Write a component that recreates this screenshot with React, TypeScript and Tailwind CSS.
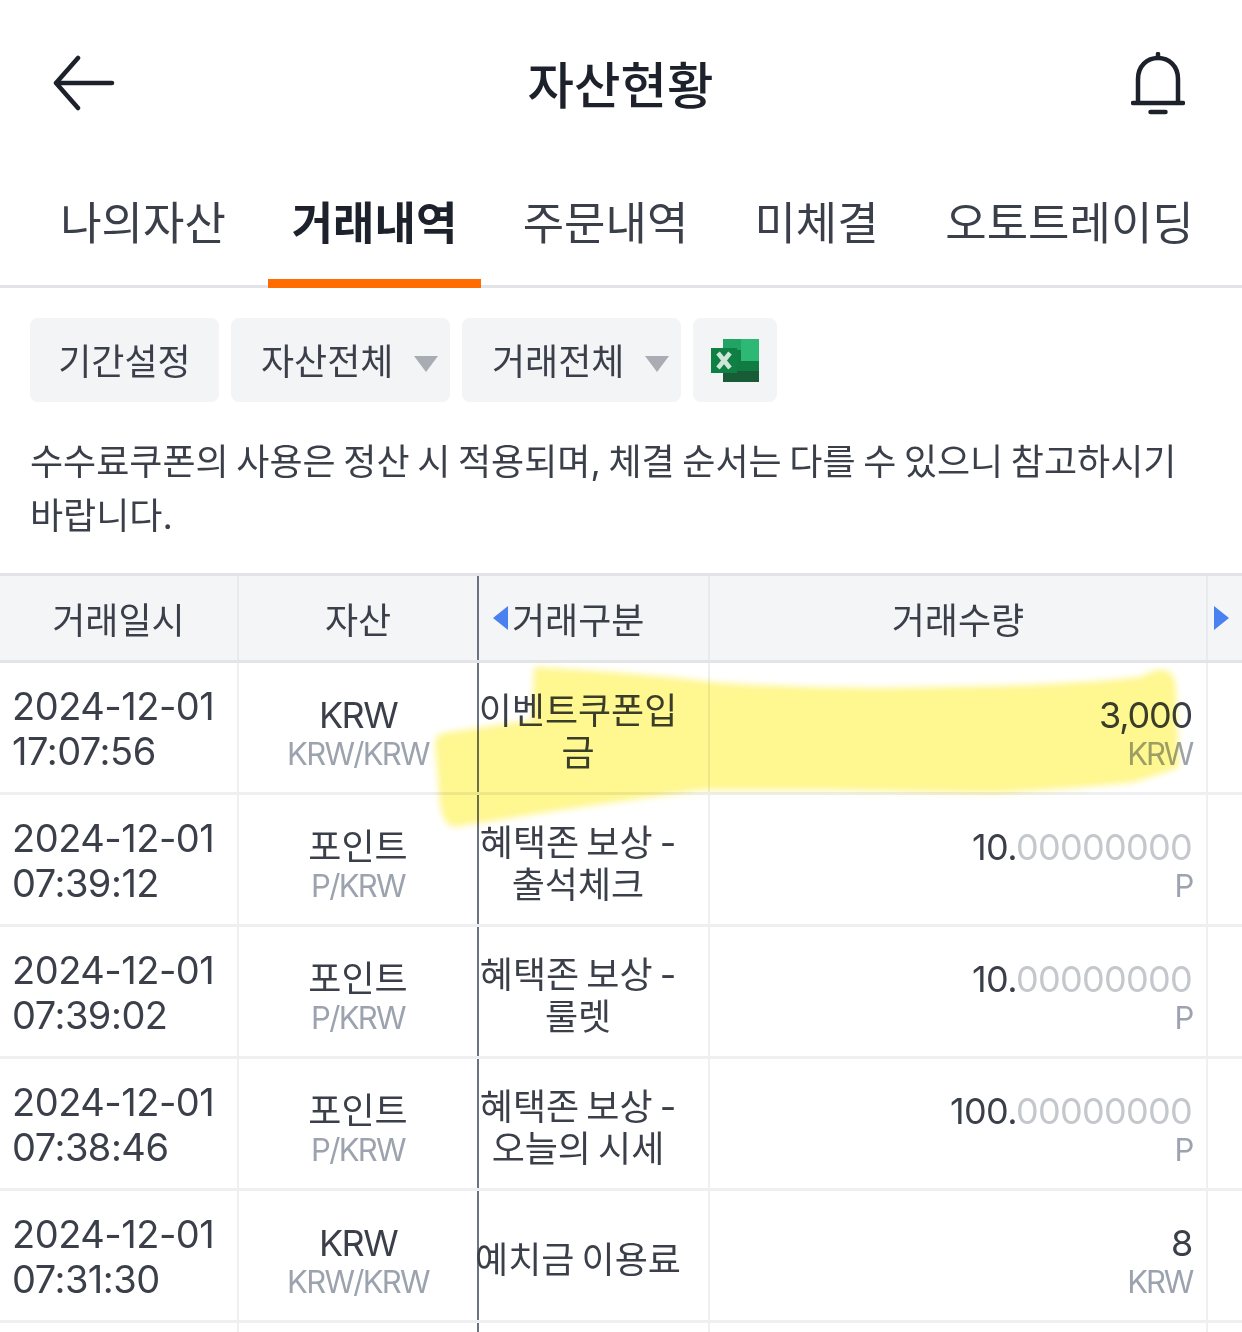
const font = "font-['Inter','Noto_Sans_CJK_KR',sans-serif]";

const rows = [
  { date: "2024-12-01", time: "17:07:56", asset: "KRW", pair: "KRW/KRW", kind: ["이벤트쿠폰입", "금"], whole: "3,000", frac: "", unit: "KRW" },
  { date: "2024-12-01", time: "07:39:12", asset: "포인트", pair: "P/KRW", kind: ["혜택존 보상 -", "출석체크"], whole: "10.", frac: "00000000", unit: "P" },
  { date: "2024-12-01", time: "07:39:02", asset: "포인트", pair: "P/KRW", kind: ["혜택존 보상 -", "룰렛"], whole: "10.", frac: "00000000", unit: "P" },
  { date: "2024-12-01", time: "07:38:46", asset: "포인트", pair: "P/KRW", kind: ["혜택존 보상 -", "오늘의 시세"], whole: "100.", frac: "00000000", unit: "P" },
  { date: "2024-12-01", time: "07:31:30", asset: "KRW", pair: "KRW/KRW", kind: ["예치금 이용료"], whole: "8", frac: "", unit: "KRW" },
];

const tabs = [
  { label: "나의자산", cls: "w-[268px] pl-[18px]" },
  { label: "거래내역", cls: "w-[213px]", active: true },
  { label: "주문내역", cls: "w-[239px] pl-[10px]" },
  { label: "미체결", cls: "w-[191px] pl-[2px]" },
  { label: "오토트레이딩", cls: "flex-1 pr-[14px]" },
];

function Caret() {
  return <span className="ml-[21px] mt-[3px] h-0 w-0 border-x-[12px] border-t-[16px] border-x-transparent border-t-[#a9adb3]" />;
}

function ExcelIcon() {
  return (
    <svg className="blur-[0.7px]" width="48" height="43" viewBox="0 0 48 43">
      <rect x="12" y="0" width="36" height="43" fill="#107c41" />
      <rect x="12" y="0" width="18" height="11" fill="#21a366" />
      <rect x="30" y="0" width="18" height="22" fill="#2eb876" />
      <rect x="12" y="32" width="36" height="11" fill="#185c37" />
      <rect x="0" y="9" width="26" height="25" fill="#0f8044" />
      <path d="M7 14l12 15M19 14L7 29" stroke="#cfe6d8" strokeWidth="4.5" fill="none" />
    </svg>
  );
}

export default function App() {
  return (
    <div className={`relative h-[1332px] w-[1242px] overflow-hidden bg-white text-[#3a3f4a] ${font}`}>
      {/* 상단 헤더 */}
      <header className="flex h-[168px] items-center justify-between pl-[52px] pr-[57px] text-[#1d212b]">
        <svg width="64" height="58" viewBox="0 0 64 58" fill="none" stroke="currentColor" strokeWidth="4.5" strokeLinecap="round" strokeLinejoin="round">
          <path d="M4 28h56M26 3L4 28l22 25" />
        </svg>
        <h1 className="mr-[6px] pt-[4px] text-[50.500px] font-medium leading-none">자산현황</h1>
        <svg width="54" height="64" viewBox="0 0 54 64" fill="none" stroke="currentColor" strokeWidth="4.5" strokeLinecap="round">
          <path d="M2 51h50M7 51V27c0-13 9-21 20-21s20 8 20 21v24M27 2v4M19.500 60h15" />
        </svg>
      </header>

      {/* 탭 */}
      <nav className="flex h-[120px] border-b-[3px] border-[#e2e4e8]">
        {tabs.map((t) => (
          <div
            key={t.label}
            className={`relative flex items-center justify-center pb-[6px] text-[45px] ${t.cls} ${t.active ? "font-bold text-[#1d212b]" : ""}`}
          >
            {t.label}
            {t.active && <span className="absolute inset-x-0 -bottom-[3px] h-[9px] bg-[#ff6c00]" />}
          </div>
        ))}
      </nav>

      {/* 필터 */}
      <div className="flex gap-3 px-[30px] pt-[30px] text-[36px]">
        <div className="flex h-[84px] w-[189px] items-center justify-center rounded-lg bg-[#f3f4f6] pt-[4px]">기간설정</div>
        <div className="flex h-[84px] w-[219px] items-center rounded-lg bg-[#f3f4f6] pl-[30px] pt-[4px]">
          자산전체
          <Caret />
        </div>
        <div className="flex h-[84px] w-[219px] items-center rounded-lg bg-[#f3f4f6] pl-[30px] pt-[4px]">
          거래전체
          <Caret />
        </div>
        <div className="flex h-[84px] w-[84px] items-center justify-center rounded-lg bg-[#f3f4f6]">
          <ExcelIcon />
        </div>
      </div>

      <p className="mt-[33px] h-[138px] px-[30px] text-[36px] leading-[54px] [word-spacing:-2.500px]">
        수수료쿠폰의 사용은 정산 시 적용되며, 체결 순서는 다를 수 있으니 참고하시기
        <br />
        바랍니다.
      </p>

      {/* 테이블 */}
      <div className="border-t-[3px] border-[#e2e4e8]">
        <div className="flex h-[87px] border-b-[3px] border-[#e2e4e8] bg-[#f4f5f7] text-[36px]">
          <div className="flex w-[239px] items-center justify-center border-r-[2px] border-[#e9eaee] pt-[6px]">거래일시</div>
          <div className="flex w-[240px] items-center justify-center border-r-[2px] border-[#6b7280] pt-[6px]">자산</div>
          <div className="flex w-[231px] items-center border-r-[2px] border-[#e9eaee] pl-[14px] pt-[6px]">
            <span className="mb-[6px] mr-[4px] h-0 w-0 border-y-[12px] border-r-[15px] border-y-transparent border-r-[#4a80f0]" />
            거래구분
          </div>
          <div className="flex w-[498px] items-center justify-center border-r-[2px] border-[#e9eaee] pt-[6px]">거래수량</div>
          <div className="flex flex-1 items-center pl-[6px]">
            <span className="h-0 w-0 border-y-[12px] border-l-[15px] border-y-transparent border-l-[#4a80f0]" />
          </div>
        </div>

        {rows.map((r) => (
          <div key={r.time} className="flex h-[132px] border-b-[3px] border-[#eeeff1]">
            <div className="flex w-[239px] flex-col justify-center border-r-[2px] border-[#eeeff1] pl-[12px] pt-[3px] text-[38px] leading-[45px] tracking-[-0.5px]">
              <span>{r.date}</span>
              <span>{r.time}</span>
            </div>
            <div className="flex w-[240px] flex-col items-center justify-center border-r-[2px] border-[#6b7280] pt-[10px]">
              <span className={`text-[36px] leading-[42px] ${r.asset === "KRW" ? "tracking-[-1.6px]" : ""}`}>{r.asset}</span>
              <span className="text-[31px] leading-[36px] tracking-[-1.7px] text-[#9ca3af]">{r.pair}</span>
            </div>
            <div className="flex w-[231px] flex-col items-center justify-center border-r-[2px] border-[#eeeff1] pr-[31px] pt-[8px] text-[36px] leading-[42px] whitespace-nowrap [word-spacing:-3px]">
              {r.kind.map((line) => (
                <span key={line}>{line}</span>
              ))}
            </div>
            <div className="flex w-[498px] flex-col items-end justify-center border-r-[2px] border-[#eeeff1] pr-[14px] pt-[10px]">
              <span className={`text-[36px] leading-[42px] ${r.frac ? "tracking-[-0.7px]" : "tracking-[-1.2px]"}`}>
                {r.whole}
                <span className="text-[#c4c7cc]">{r.frac}</span>
              </span>
              <span className="text-[31px] leading-[36px] tracking-[-2.200px] text-[#9ca3af]">{r.unit}</span>
            </div>
          </div>
        ))}

        {/* 화면 아래로 이어지는 다음 행 */}
        <div className="flex h-[132px]">
          <div className="w-[239px] border-r-[2px] border-[#eeeff1]" />
          <div className="w-[240px] border-r-[2px] border-[#6b7280]" />
          <div className="w-[231px] border-r-[2px] border-[#eeeff1]" />
          <div className="w-[498px] border-r-[2px] border-[#eeeff1]" />
        </div>
      </div>

      {/* 형광펜 표시 */}
      <svg className="absolute left-0 top-0 mix-blend-multiply" width="1242" height="1332" fill="#fff790">
        <defs>
          <filter id="soft">
            <feGaussianBlur stdDeviation="3" />
          </filter>
        </defs>
        <path
          filter="url(#soft)"
          d="M534 667Q630 672 722 683Q830 690 937 687Q1060 686 1141 677Q1155 668 1166 670Q1176 675 1176 690L1179 767Q1160 775 1130 783Q1060 790 991 793L830 790L701 790Q630 800 561 810L454 827Q443 825 440 803L435 743Q436 735 443 733L532 720Z"
        />
      </svg>
    </div>
  );
}
